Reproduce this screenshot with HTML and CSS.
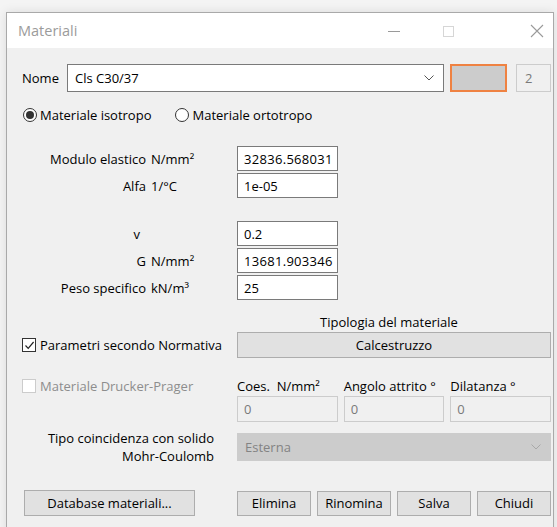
FILE: index.html
```html
<!DOCTYPE html>
<html lang="it">
<head>
<meta charset="utf-8">
<title>Materiali</title>
<link rel="stylesheet" href="styles.css">
</head>
<body>
<div class="window">
  <div class="titlebar">
    <span class="title">Materiali</span>
    <div class="caption-buttons">
      <span class="cap cap-min"><svg width="12" height="12" viewBox="0 0 12 12"><line x1="0" y1="6.5" x2="12" y2="6.5" stroke="#9a9a9a" stroke-width="1"/></svg></span>
      <span class="cap cap-max"><svg width="12" height="12" viewBox="0 0 12 12"><rect x="1.5" y="1.5" width="10" height="10" fill="none" stroke="#d6d6d6" stroke-width="1"/></svg></span>
      <span class="cap cap-close"><svg width="14" height="14" viewBox="0 0 14 14"><path d="M1 1 L13 13 M13 1 L1 13" stroke="#9a9a9a" stroke-width="1.1"/></svg></span>
    </div>
  </div>

  <div class="client">
    <div class="name-row">
      <span class="name-label">Nome</span>
      <div class="combo">
        <span>Cls C30/37</span>
        <svg class="arrow" width="10" height="6" viewBox="0 0 10 6"><path d="M0.5 0.5 L5 5 L9.5 0.5" fill="none" stroke="#555" stroke-width="1"/></svg>
      </div>
      <div class="swatch"></div>
      <div class="field field-disabled index-field">2</div>
    </div>

    <div class="radio-row">
      <label class="radio"><span class="radio-dot checked"></span>Materiale isotropo</label>
      <label class="radio"><span class="radio-dot"></span>Materiale ortotropo</label>
    </div>

    <div class="params">
      <span class="p-label">Modulo elastico</span><span class="p-unit">N/mm²</span><div class="field value long">32836.568031</div>
      <span class="p-label">Alfa</span><span class="p-unit">1/°C</span><div class="field value">1e-05</div>
      <span class="p-spacer"></span>
      <span class="p-label p-symbol">v</span><span class="p-unit"></span><div class="field value">0.2</div>
      <span class="p-label">G</span><span class="p-unit">N/mm²</span><div class="field value long">13681.903346</div>
      <span class="p-label">Peso specifico</span><span class="p-unit">kN/m³</span><div class="field value">25</div>
    </div>

    <div class="norm-row">
      <label class="check"><span class="check-box checked"><svg width="11" height="11" viewBox="0 0 11 11"><path d="M1.5 5.5 L4.2 8.3 L9.6 2" fill="none" stroke="#222" stroke-width="1.2"/></svg></span>Parametri secondo Normativa</label>
      <div class="norm-right">
        <span class="caption">Tipologia del materiale</span>
        <div class="btn wide-btn">Calcestruzzo</div>
      </div>
    </div>

    <div class="dp-row">
      <label class="check disabled"><span class="check-box"></span>Materiale Drucker-Prager</label>
      <div class="dp-fields">
        <div class="dp-col"><span class="dp-label">Coes.&nbsp;&nbsp;N/mm²</span><div class="field field-disabled">0</div></div>
        <div class="dp-col"><span class="dp-label">Angolo attrito °</span><div class="field field-disabled">0</div></div>
        <div class="dp-col"><span class="dp-label">Dilatanza °</span><div class="field field-disabled">0</div></div>
      </div>
    </div>

    <div class="mc-row">
      <span class="mc-label">Tipo coincidenza con solido<br>Mohr-Coulomb</span>
      <div class="combo combo-disabled">
        <span>Esterna</span>
        <svg class="arrow" width="10" height="6" viewBox="0 0 10 6"><path d="M0.5 0.5 L5 5 L9.5 0.5" fill="none" stroke="#a8a8a8" stroke-width="1"/></svg>
      </div>
    </div>

    <div class="button-row">
      <div class="btn db-btn">Database materiali...</div>
      <div class="action-buttons">
        <div class="btn">Elimina</div>
        <div class="btn">Rinomina</div>
        <div class="btn">Salva</div>
        <div class="btn">Chiudi</div>
      </div>
    </div>
  </div>
</div>
</body>
</html>
```

FILE: styles.css
```css
* { box-sizing: border-box; }

html, body {
  margin: 0;
  height: 100%;
  overflow: hidden;
}

body {
  background: #f4f4f4;
  font-family: "Open Sans", "Noto Sans", sans-serif;
  font-size: 13px;
  color: #000;
}

/* dialog frame */
.window {
  margin: 12px 0 0 6px;
  width: 548px;
  height: 540px;
  border: 1px solid #a9a9a9;
  background: #f0f0f0;
  box-shadow: 0 0 10px rgba(0, 0, 0, 0.10);
}

.titlebar {
  height: 35px;
  background: #fff;
  display: flex;
  align-items: center;
  justify-content: space-between;
  padding-left: 11px;
}

.title {
  font-size: 14.5px;
  color: #9b9b9b;
}

.caption-buttons {
  display: flex;
  align-items: center;
  height: 100%;
}

.cap {
  display: flex;
  align-items: center;
  justify-content: center;
  height: 100%;
  width: 32px;
}
.cap-min { margin-right: 22px; }
.cap-max { margin-right: 57px; }

/* client area */
.client {
  padding: 16px 2px 0 15px;
}

.field {
  height: 25px;
  background: #fff;
  border: 1px solid #7a7a7a;
  padding: 0 0 0 6px;
  display: flex;
  align-items: center;
  white-space: nowrap;
  overflow: hidden;
  font-size: 13px;
}

.field-disabled {
  background: #f0f0f0;
  border-color: #cccccc;
  color: #7a7a7a;
}

/* name row */
.name-row {
  display: flex;
  align-items: center;
  height: 28px;
}

.name-label {
  width: 45px;
}

.combo {
  width: 377px;
  height: 28px;
  border: 1px solid #7a7a7a;
  background: #fff;
  display: flex;
  align-items: center;
  justify-content: space-between;
  padding: 0 9px 0 7px;
  font-size: 13px;
}

.swatch {
  width: 57px;
  height: 28px;
  margin-left: 6px;
  background: #cccccc;
  border: 2px solid #ef8242;
}

.index-field {
  width: 35px;
  height: 28px;
  margin-left: 9px;
  padding-left: 8px;
}

/* radio buttons */
.radio-row {
  display: flex;
  gap: 24px;
  margin-top: 15px;
  padding-left: 1px;
  height: 16px;
  align-items: center;
}

.radio, .check {
  display: flex;
  align-items: center;
  white-space: nowrap;
}

.radio-dot {
  width: 14px;
  height: 14px;
  border: 1px solid #333;
  border-radius: 50%;
  background: #fff;
  margin-right: 3px;
  display: flex;
  align-items: center;
  justify-content: center;
}
.radio-dot.checked::after {
  content: "";
  width: 8px;
  height: 8px;
  border-radius: 50%;
  background: #333;
}

/* parameter grid */
.params {
  display: grid;
  grid-template-columns: 124px 91px 101px;
  grid-template-rows: 25px 25px 19px 25px 25px 25px;
  row-gap: 2px;
  margin-top: 23px;
  align-items: center;
}

.p-label {
  text-align: right;
}

.p-symbol {
  padding-right: 6px;
}

.p-unit {
  padding-left: 5px;
}

.p-spacer {
  grid-column: 1 / -1;
}

.value.long { letter-spacing: 0.3px; }

/* normative row */
.norm-row {
  display: flex;
  align-items: flex-end;
  margin-top: 14px;
}

.check {
  width: 215px;
  height: 26px;
}

.check-box {
  width: 14px;
  height: 14px;
  border: 1px solid #333;
  background: #fff;
  margin-right: 4px;
  display: flex;
  align-items: center;
  justify-content: center;
}

.check.disabled {
  color: #8d8d8d;
}
.check.disabled .check-box {
  border-color: #cccccc;
  background: #fff;
}

.norm-right {
  width: 314px;
  display: flex;
  flex-direction: column;
  align-items: center;
  gap: 2px;
}

.caption {
  line-height: 16px;
  margin-right: 10px;
}

.btn {
  height: 26px;
  background: #e1e1e1;
  border: 1px solid #adadad;
  display: flex;
  align-items: center;
  justify-content: center;
  white-space: nowrap;
}

.wide-btn {
  width: 100%;
}

/* Drucker-Prager row */
.dp-row {
  display: flex;
  align-items: flex-start;
  margin-top: 20px;
}

.dp-row .check {
  height: 16px;
}

.dp-fields {
  display: flex;
  gap: 6px;
  width: 314px;
}

.dp-col {
  flex: 1;
  display: flex;
  flex-direction: column;
  gap: 2px;
}

.dp-label {
  line-height: 16px;
  white-space: nowrap;
}

.dp-col .field {
  height: 26px;
}

/* Mohr-Coulomb row */
.mc-row {
  display: flex;
  align-items: center;
  margin-top: 7px;
}

.mc-label {
  width: 215px;
  text-align: right;
  line-height: 18px;
  padding-right: 23px;
}

.combo-disabled {
  width: 314px;
  background: #cccccc;
  border-color: #cccccc;
  color: #838383;
}

/* bottom buttons */
.button-row {
  display: flex;
  align-items: center;
  margin-top: 25px;
}

.db-btn {
  width: 171px;
  margin-left: 2px;
  margin-right: 42px;
}

.action-buttons {
  display: flex;
  gap: 6px;
}

.action-buttons .btn {
  width: 74px;
  height: 25px;
}
```
